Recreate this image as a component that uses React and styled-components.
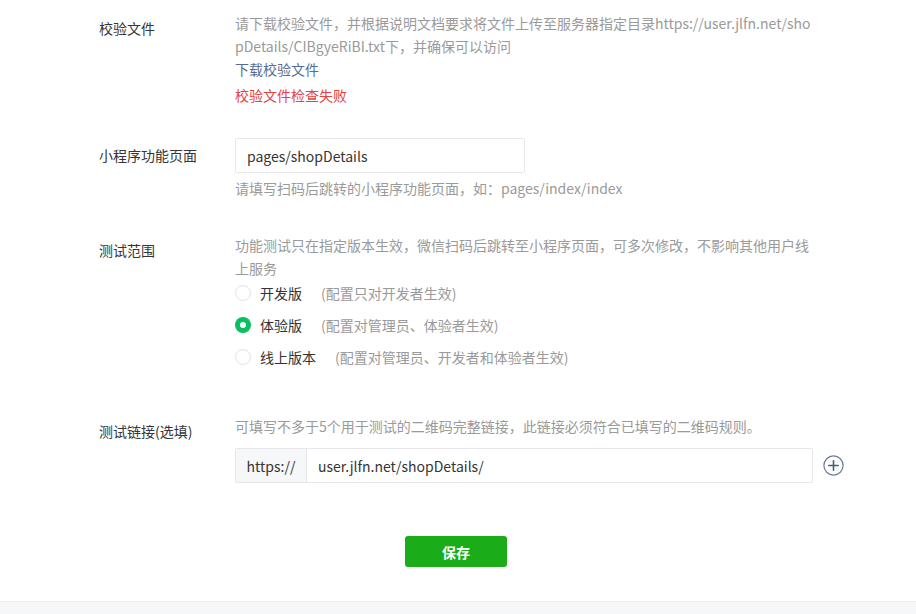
import React from "react";
import styled, { createGlobalStyle } from "styled-components";

const Global = createGlobalStyle`
  html, body { margin: 0; padding: 0; background: #fff; }
  body {
    font-family: "Noto Sans CJK SC", "Noto Sans", sans-serif;
    font-size: 14px;
    color: #353535;
  }
`;

const Page = styled.div`
  min-height: 614px;
  display: flex;
  flex-direction: column;
  background: #fff;
`;

const Form = styled.div`
  padding: 12px 0 0 99px;
  display: flex;
  flex-direction: column;
`;

const Row = styled.div`
  display: grid;
  grid-template-columns: 136px 578px;
  margin-top: ${(p) => p.$mt || 0}px;
`;

const Label = styled.div`
  line-height: 23px;
  padding-top: ${(p) => p.$pt ?? 5}px;
  color: #353535;
  white-space: nowrap;
`;

const Content = styled.div`
  display: flex;
  flex-direction: column;
`;

const Desc = styled.div`
  line-height: 23px;
  color: #9a9a9a;
  word-break: break-all;
  margin-top: ${(p) => p.$mt || 0}px;
`;

const Link = styled.a`
  line-height: 23px;
  color: #576b95;
  text-decoration: none;
  cursor: pointer;
`;

const Error = styled.div`
  line-height: 23px;
  margin-top: 3px;
  color: #e64340;
`;

const TextInput = styled.div`
  box-sizing: border-box;
  width: 290px;
  height: 35px;
  border: 1px solid #e7e7eb;
  border-radius: 2px;
  padding: 0 11px;
  display: flex;
  align-items: center;
  color: #353535;
`;

const RadioGroup = styled.div`
  display: flex;
  flex-direction: column;
  gap: 10px;
  margin-top: 2px;
`;

const RadioItem = styled.label`
  display: flex;
  align-items: center;
  height: 22px;
  cursor: pointer;
`;

const RadioCircle = styled.span`
  box-sizing: border-box;
  width: 16px;
  height: 16px;
  border-radius: 50%;
  border: ${(p) => (p.$checked ? "none" : "1px solid #e2e2e2")};
  background: ${(p) => (p.$checked ? "#07c160" : "#fff")};
  display: flex;
  align-items: center;
  justify-content: center;
  margin-right: 9px;
  flex-shrink: 0;
  &::after {
    content: "";
    display: ${(p) => (p.$checked ? "block" : "none")};
    width: 6px;
    height: 6px;
    border-radius: 50%;
    background: #fff;
  }
`;

const RadioText = styled.span`
  color: #353535;
`;

const RadioHint = styled.span`
  color: #9a9a9a;
  margin-left: 19px;
`;

const LinkLine = styled.div`
  display: flex;
  align-items: center;
  margin-top: 10px;
`;

const InputGroup = styled.div`
  box-sizing: border-box;
  width: 578px;
  flex-shrink: 0;
  height: 35px;
  border: 1px solid #e7e7eb;
  border-radius: 2px;
  display: flex;
  align-items: stretch;
`;

const Prefix = styled.div`
  width: 70px;
  background: #f6f7f9;
  border-right: 1px solid #e7e7eb;
  display: flex;
  align-items: center;
  justify-content: center;
  color: #353535;
`;

const GroupText = styled.div`
  flex: 1;
  display: flex;
  align-items: center;
  padding-left: 11px;
  color: #353535;
`;

const AddButton = styled.button`
  border: none;
  background: none;
  padding: 0;
  margin-left: 9px;
  width: 22px;
  height: 22px;
  flex-shrink: 0;
  display: flex;
  align-items: center;
  justify-content: center;
  cursor: pointer;
`;

const Actions = styled.div`
  display: flex;
  justify-content: center;
  padding-right: 4px;
  margin-top: 53px;
  width: 912px;
`;

const SaveButton = styled.button`
  width: 102px;
  height: 31px;
  border: none;
  border-radius: 3px;
  background: #1aad19;
  color: #fff;
  font-family: inherit;
  font-size: 14px;
  font-weight: 700;
  cursor: pointer;
`;

const FormArea = styled.div`
  flex: 1;
  display: flex;
  flex-direction: column;
`;

const Footer = styled.div`
  height: 12px;
  background: #f6f7f9;
  border-top: 1px solid #eef0f3;
`;

const radios = [
  { t: "开发版", h: "(配置只对开发者生效)", c: false },
  { t: "体验版", h: "(配置对管理员、体验者生效)", c: true },
  { t: "线上版本", h: "(配置对管理员、开发者和体验者生效)", c: false },
];

export default function App() {
  return (
    <Page>
      <Global />
      <FormArea>
        <Form>
          <Row>
            <Label>校验文件</Label>
            <Content>
              <Desc>
                请下载校验文件，并根据说明文档要求将文件上传至服务器指定目录https://user.jlfn.net/shopDetails/CIBgyeRiBI.txt下，并确保可以访问
              </Desc>
              <Link>下载校验文件</Link>
              <Error>校验文件检查失败</Error>
            </Content>
          </Row>
          <Row $mt={31}>
            <Label $pt={6}>小程序功能页面</Label>
            <Content>
              <TextInput>pages/shopDetails</TextInput>
              <Desc $mt={4}>请填写扫码后跳转的小程序功能页面，如：pages/index/index</Desc>
            </Content>
          </Row>
          <Row $mt={34}>
            <Label>测试范围</Label>
            <Content>
              <Desc>
                功能测试只在指定版本生效，微信扫码后跳转至小程序页面，可多次修改，不影响其他用户线上服务
              </Desc>
              <RadioGroup>
                {radios.map((r) => (
                  <RadioItem key={r.t}>
                    <RadioCircle $checked={r.c} />
                    <RadioText>{r.t}</RadioText>
                    <RadioHint>{r.h}</RadioHint>
                  </RadioItem>
                ))}
              </RadioGroup>
            </Content>
          </Row>
          <Row $mt={47}>
            <Label>测试链接(选填)</Label>
            <Content>
              <Desc>可填写不多于5个用于测试的二维码完整链接，此链接必须符合已填写的二维码规则。</Desc>
              <LinkLine>
                <InputGroup>
                  <Prefix>https://</Prefix>
                  <GroupText>user.jlfn.net/shopDetails/</GroupText>
                </InputGroup>
                <AddButton aria-label="添加">
                  <svg width="21" height="21" viewBox="0 0 21 21">
                    <circle cx="10.5" cy="10.5" r="9.6" fill="none" stroke="#6b7a9f" strokeWidth="1.2" />
                    <path d="M10.5 5.8v9.4M5.8 10.5h9.4" stroke="#4a5a82" strokeWidth="1.6" strokeLinecap="round" />
                  </svg>
                </AddButton>
              </LinkLine>
            </Content>
          </Row>
        </Form>
        <Actions>
          <SaveButton>保存</SaveButton>
        </Actions>
      </FormArea>
      <Footer />
    </Page>
  );
}
